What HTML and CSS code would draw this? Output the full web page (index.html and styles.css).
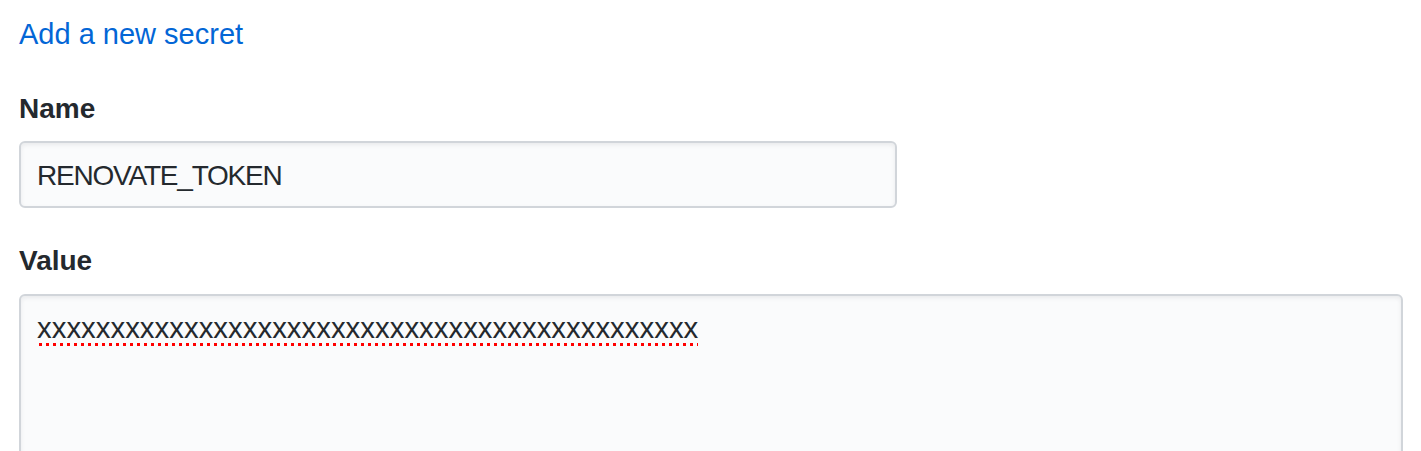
FILE: index.html
```html
<!DOCTYPE html>
<html lang="en">
<head>
<meta charset="utf-8">
<title>Add a new secret</title>
<link rel="stylesheet" href="styles.css">
</head>
<body>
<div class="page">
  <p class="add-link"><a href="#" class="link">Add a new secret</a></p>
  <form class="secret-form">
    <div class="form-group">
      <label class="form-label" for="secret-name">Name</label>
      <div class="form-control input-name" id="secret-name">RENOVATE_TOKEN</div>
    </div>
    <div class="form-group">
      <label class="form-label" for="secret-value">Value</label>
      <div class="form-control input-value" id="secret-value"><span class="misspelled">xxxxxxxxxxxxxxxxxxxxxxxxxxxxxxxxxxxxxxxxxxxxx</span></div>
    </div>
  </form>
</div>
</body>
</html>
```

FILE: styles.css
```css
html, body {
  margin: 0;
  padding: 0;
  background: #ffffff;
}

body {
  font-family: "Liberation Sans", Arial, Helvetica, sans-serif;
  color: #24292e;
  font-size: 28px;
}

.page {
  padding: 14px 18px 0 19px;
  overflow: hidden;
  height: 437px;
}

.add-link {
  margin: 0;
  line-height: 40px;
  font-size: 29px;
}

.link {
  color: #0366d6;
  text-decoration: none;
}

.secret-form {
  display: flex;
  flex-direction: column;
  gap: 33px;
  margin-top: 35px;
}

.form-group {
  display: flex;
  flex-direction: column;
  align-items: flex-start;
}

.form-label {
  display: block;
  font-weight: 700;
  line-height: 40px;
  margin-bottom: 12px;
}

.form-control {
  box-sizing: border-box;
  background: #fafbfc;
  border: 2px solid #d1d5da;
  border-radius: 6px;
  box-shadow: inset 0 2px 4px rgba(27, 31, 35, 0.075);
  color: #24292e;
  font-size: 28px;
}

.input-name {
  width: 878px;
  padding: 13px 16px 11px;
  line-height: 39px;
  letter-spacing: -1.2px;
}

.input-value {
  width: 1384px;
  height: 220px;
  padding: 12px 16px;
  line-height: 40px;
  margin-top: 1px;
  font-size: 29.4px;
}

.misspelled {
  padding-bottom: 3px;
  background-image: radial-gradient(circle at center, #ff0000 1.5px, rgba(255, 0, 0, 0) 2px);
  background-size: 7px 5px;
  background-repeat: repeat-x;
  background-position: 0 100%;
}
```
